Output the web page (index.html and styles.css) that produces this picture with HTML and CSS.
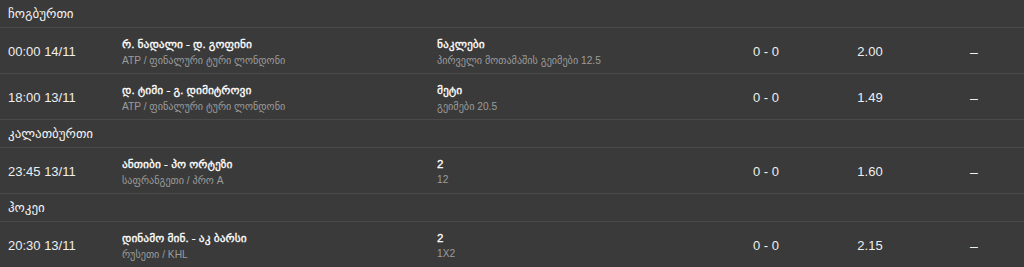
FILE: index.html
```html
<!DOCTYPE html>
<html lang="ka">
<head>
<meta charset="utf-8">
<link rel="stylesheet" href="styles.css">
</head>
<body>
<div class="board">
  <div class="sport">ჩოგბურთი</div>
  <div class="row">
    <div class="time">00:00 14/11</div>
    <div class="cell"><div class="main">რ. ნადალი - დ. გოფინი</div><div class="sub">ATP / ფინალური ტური ლონდონი</div></div>
    <div class="cell"><div class="main">ნაკლები</div><div class="sub">პირველი მოთამაშის გეიმები 12.5</div></div>
    <div class="num">0 - 0</div>
    <div class="num">2.00</div>
    <div class="num dash">–</div>
  </div>
  <div class="row">
    <div class="time">18:00 13/11</div>
    <div class="cell"><div class="main">დ. ტიმი - გ. დიმიტროვი</div><div class="sub">ATP / ფინალური ტური ლონდონი</div></div>
    <div class="cell"><div class="main">მეტი</div><div class="sub">გეიმები 20.5</div></div>
    <div class="num">0 - 0</div>
    <div class="num">1.49</div>
    <div class="num dash">–</div>
  </div>
  <div class="sport">კალათბურთი</div>
  <div class="row">
    <div class="time">23:45 13/11</div>
    <div class="cell"><div class="main">ანთიბი - პო ორტეზი</div><div class="sub">საფრანგეთი / პრო A</div></div>
    <div class="cell"><div class="main">2</div><div class="sub">12</div></div>
    <div class="num">0 - 0</div>
    <div class="num">1.60</div>
    <div class="num dash">–</div>
  </div>
  <div class="sport">ჰოკეი</div>
  <div class="row">
    <div class="time">20:30 13/11</div>
    <div class="cell"><div class="main">დინამო მინ. - აკ ბარსი</div><div class="sub">რუსეთი / KHL</div></div>
    <div class="cell"><div class="main">2</div><div class="sub">1X2</div></div>
    <div class="num">0 - 0</div>
    <div class="num">2.15</div>
    <div class="num dash">–</div>
  </div>
</div>
</body>
</html>
```
FILE: styles.css
```css
html, body {
  margin: 0;
  padding: 0;
  background: #3a3a3a;
}
body {
  font-family: "Liberation Sans", "DejaVu Sans", sans-serif;
  color: #f0f0f0;
}
.board {
  display: flex;
  flex-direction: column;
}
.sport {
  height: 27px;
  line-height: 27px;
  padding-left: 8px;
  font-size: 13px;
  color: #f2f2f2;
  border-bottom: 1px solid #4a4a4a;
}
.row {
  display: grid;
  grid-template-columns: 114px 315px 285px 104px 104px 1fr;
  align-items: center;
  height: 45px;
  border-bottom: 1px solid #4a4a4a;
}
.time {
  padding-left: 8px;
  font-size: 13px;
  color: #eeeeee;
  padding-top: 2px;
}
.cell {
  padding-left: 8px;
  padding-top: 2px;
  display: flex;
  flex-direction: column;
  gap: 4px;
}
.main {
  font-size: 11.5px;
  color: #ffffff;
  -webkit-text-stroke: 0.3px #ffffff;
}
.sub {
  font-size: 10.2px;
  color: #9c9c9c;
}
.num {
  text-align: center;
  font-size: 13px;
  color: #eeeeee;
  padding-top: 2px;
}
.dash {
  font-size: 14px;
  padding-left: 2px;
}
```
